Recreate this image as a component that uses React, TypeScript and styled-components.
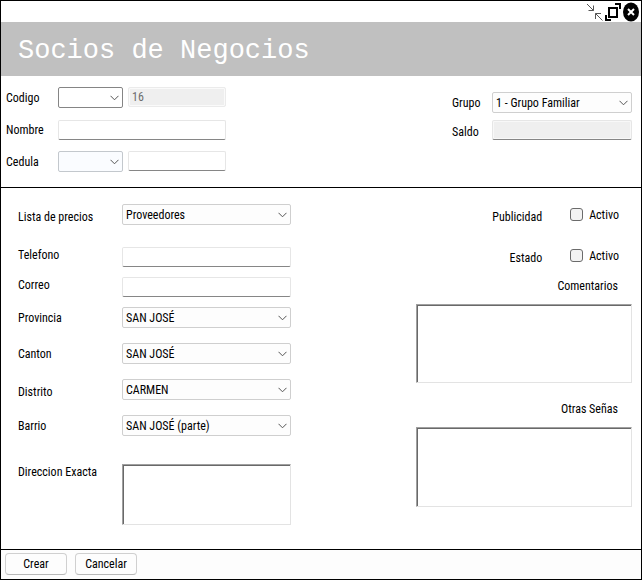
import React from "react";
import styled, { createGlobalStyle } from "styled-components";

const GlobalStyle = createGlobalStyle`
  *, *::before, *::after { box-sizing: border-box; }
  body {
    margin: 0;
    background: #fff;
    color: #000;
    font: 12px/16px "Roboto Condensed", Roboto, "Liberation Sans", sans-serif;
  }
  input, select, textarea, button { font: inherit; color: inherit; margin: 0; }
`;

const Window = styled.main`
  display: flex;
  flex-direction: column;
  min-height: 100vh;
  margin-right: 1px;
  border: 1px solid #000;
  background: #fff;
`;

const TitleBar = styled.div`
  display: flex;
  justify-content: flex-end;
  align-items: center;
  height: 21px;
  padding-right: 1px;
`;

const IconButton = styled.button`
  display: grid;
  place-items: center;
  width: 18px;
  height: 20px;
  padding: 0;
  border: 0;
  background: none;
`;

const Banner = styled.header`
  height: 54px;
  padding: 0 17px;
  background: #c0c0c0;
`;

const Title = styled.h1`
  margin: 0;
  color: #fff;
  font: 400 27px/58px "Liberation Mono", monospace;
  white-space: nowrap;
`;

const Summary = styled.section`
  display: grid;
  grid-template-columns: minmax(0, 220fr) minmax(0, 180fr);
  column-gap: 226px;
  padding: 11px 9px 15px 5px;
  border-bottom: 1px solid #000;
`;

const SummaryColumn = styled.div<{ $gap: number; $top?: number }>`
  display: flex;
  flex-direction: column;
  gap: ${(p) => p.$gap}px;
  padding-top: ${(p) => p.$top ?? 0}px;
`;

const Details = styled.section`
  display: grid;
  flex: 1;
  grid-template-columns: minmax(0, 273fr) minmax(0, 216fr);
  column-gap: 125px;
  padding: 16px 9px 16px 17px;
`;

const Column = styled.div`
  display: flex;
  flex-direction: column;
`;

const space = { none: 0, small: 9, medium: 15, large: 22, xlarge: 28 };
type Space = keyof typeof space;

const Row = styled.div<{ $label: number; $before?: Space; $align?: string }>`
  display: grid;
  grid-template-columns: ${(p) => p.$label}px minmax(0, 1fr);
  align-items: ${(p) => p.$align ?? "center"};
  min-height: 21px;
  margin-top: ${(p) => space[p.$before ?? "none"]}px;
`;

const Pair = styled.div`
  display: grid;
  grid-template-columns: 65px minmax(0, 1fr);
  align-items: start;
  gap: 5px;
`;

const Label = styled.label`
  white-space: nowrap;
`;

const TextBox = styled.input`
  display: block;
  width: 100%;
  height: 20px;
  padding: 0 3px;
  border: 1px solid #e6e6e6;
  border-bottom-color: #868686;
  border-radius: 2px;
  background: #fff;
  outline: 0;

  &:read-only { background: #efefef; box-shadow: inset 0 0 0 1px #f8f8f8; }
  &:disabled {
    border-color: #ebebeb;
    background: #efefef;
    color: #6d6d6d;
    box-shadow: inset 0 0 0 1px #fafafa;
  }
`;

type Tone = "light" | "dark" | "cool";
const toneBorder = { light: "#cfcfcf", dark: "#858585", cool: "#c3c8cd" };
const toneFill = { light: "#fdfdfd", dark: "#fff", cool: "#fafcff" };

const SelectFrame = styled.div`
  display: grid;
  align-items: center;
  > * { grid-area: 1 / 1; }
  > svg { justify-self: end; margin-right: 4px; pointer-events: none; }
`;

const SelectBox = styled.select<{ $tone: Tone }>`
  appearance: none;
  width: 100%;
  height: 21px;
  padding: 0 18px 0 3px;
  border: 1px solid ${(p) => toneBorder[p.$tone]};
  border-radius: 2px;
  background: ${(p) => toneFill[p.$tone]};
  outline: 0;
`;

const Memo = styled.textarea<{ $height: number }>`
  display: block;
  width: 100%;
  height: ${(p) => p.$height}px;
  padding: 2px;
  border: 1px solid #e3e3e3;
  border-top-color: #a0a0a0;
  border-left-color: #a0a0a0;
  box-shadow: inset 1px 1px 0 #696969;
  background: #fff;
  outline: 0;
  resize: none;
`;

const CheckRow = styled.div`
  display: flex;
  justify-content: flex-end;
  align-items: flex-end;
  gap: 28px;
  height: 21px;
  padding-right: 13px;

  & + & { margin-top: 20px; }
`;

const CheckLabel = styled.label`
  display: flex;
  align-items: center;
  gap: 6px;
  height: 21px;
`;

const Check = styled.input`
  appearance: none;
  width: 13px;
  height: 13px;
  border: 1px solid #6b6b6b;
  border-radius: 3px;
  background: #f3f3f3;
  &:checked { background: #005fb8; }
`;

const MemoField = styled.div<{ $before: number }>`
  display: flex;
  flex-direction: column;
  gap: 10px;
  margin-top: ${(p) => p.$before}px;
  > label { align-self: flex-end; padding-right: 14px; }
`;

const Footer = styled.footer`
  display: flex;
  gap: 8px;
  padding: 3px 4px 4px;
  border-top: 1px solid #000;
  background: #fdfdfd;
`;

const Button = styled.button`
  width: 62px;
  height: 22px;
  padding: 0;
  border: 1px solid #d0d0d0;
  border-bottom-color: #b8b8b8;
  border-radius: 4px;
  background: #fdfdfd;
`;

interface ComboProps {
  id: string;
  options: string[];
  tone?: Tone;
  label?: string;
}

function Combo({ id, options, tone = "light", label }: ComboProps) {
  return (
    <SelectFrame>
      <SelectBox id={id} $tone={tone} aria-label={label}>
        {options.map((o) => (
          <option key={o}>{o}</option>
        ))}
      </SelectBox>
      <svg width="9" height="6" viewBox="0 0 9 6" fill="none" stroke="#555">
        <path d="M0.5 0.8 4.5 4.8 8.5 0.8" />
      </svg>
    </SelectFrame>
  );
}

interface FieldProps {
  id: string;
  label: string;
  before?: Space;
  align?: string;
  options?: string[];
}

function Field({ id, label, before, align, options }: FieldProps) {
  return (
    <Row $label={104} $before={before} $align={align}>
      <Label htmlFor={id}>{label}</Label>
      {options ? <Combo id={id} options={options} /> : <TextBox id={id} />}
    </Row>
  );
}

function CheckField({ label }: { label: string }) {
  return (
    <CheckRow>
      <span>{label}</span>
      <CheckLabel>
        <Check type="checkbox" /> Activo
      </CheckLabel>
    </CheckRow>
  );
}

export default function App() {
  return (
    <>
      <GlobalStyle />
      <Window>
        <TitleBar>
          <IconButton aria-label="Minimizar">
            <svg width="18" height="20" viewBox="0 0 18 20" fill="none" stroke="#555">
              <path d="M1 2 7.5 8.5M2.5 8.5h5v-5M16.5 18.5 9.5 11.500M15 11.500H9.5v5.500" />
            </svg>
          </IconButton>
          <IconButton aria-label="Restaurar">
            <svg width="18" height="20" viewBox="0 0 18 20" fill="none" stroke="#000" strokeWidth="2">
              <path d="M5 6h8v9H5zM11 2h5v5M2 13v5h5" />
            </svg>
          </IconButton>
          <IconButton aria-label="Cerrar">
            <svg width="18" height="20" viewBox="0 0 18 20">
              <ellipse cx="9" cy="10" rx="8" ry="9.500" />
              <path d="M6 7l6 6M12 7l-6 6" stroke="#fff" strokeWidth="2" />
            </svg>
          </IconButton>
        </TitleBar>
        <Banner>
          <Title>Socios de Negocios</Title>
        </Banner>
        <Summary>
          <SummaryColumn $gap={11}>
            <Row $label={52}>
              <Label htmlFor="codigo">Codigo</Label>
              <Pair>
                <Combo id="serie" options={[""]} tone="dark" label="Serie" />
                <TextBox id="codigo" defaultValue="16" disabled />
              </Pair>
            </Row>
            <Row $label={52}>
              <Label htmlFor="nombre">Nombre</Label>
              <TextBox id="nombre" />
            </Row>
            <Row $label={52}>
              <Label htmlFor="cedula">Cedula</Label>
              <Pair>
                <Combo id="tipo" options={[""]} tone="cool" label="Tipo de cedula" />
                <TextBox id="cedula" />
              </Pair>
            </Row>
          </SummaryColumn>
          <SummaryColumn $gap={6} $top={5}>
            <Row $label={40}>
              <Label htmlFor="grupo">Grupo</Label>
              <Combo id="grupo" options={["1 - Grupo Familiar"]} />
            </Row>
            <Row $label={40} $align="end">
              <Label htmlFor="saldo">Saldo</Label>
              <TextBox id="saldo" readOnly />
            </Row>
          </SummaryColumn>
        </Summary>
        <Details>
          <Column>
            <Field id="lista" label="Lista de precios" align="end" options={["Proveedores"]} />
            <Field id="telefono" label="Telefono" before="large" align="start" />
            <Field id="correo" label="Correo" before="small" align="start" />
            <Field id="provincia" label="Provincia" before="small" options={["SAN JOSÉ"]} />
            <Field id="canton" label="Canton" before="medium" options={["SAN JOSÉ"]} />
            <Field id="distrito" label="Distrito" before="medium" align="end" options={["CARMEN"]} />
            <Field id="barrio" label="Barrio" before="medium" options={["SAN JOSÉ (parte)"]} />
            <Row $label={104} $before="xlarge" $align="start">
              <Label htmlFor="direccion">Direccion Exacta</Label>
              <Memo id="direccion" $height={61} />
            </Row>
          </Column>
          <Column>
            <CheckField label="Publicidad" />
            <CheckField label="Estado" />
            <MemoField $before={12}>
              <Label htmlFor="comentarios">Comentarios</Label>
              <Memo id="comentarios" $height={79} />
            </MemoField>
            <MemoField $before={18}>
              <Label htmlFor="senas">Otras Señas</Label>
              <Memo id="senas" $height={80} />
            </MemoField>
          </Column>
        </Details>
        <Footer>
          <Button>Crear</Button>
          <Button>Cancelar</Button>
        </Footer>
      </Window>
    </>
  );
}
